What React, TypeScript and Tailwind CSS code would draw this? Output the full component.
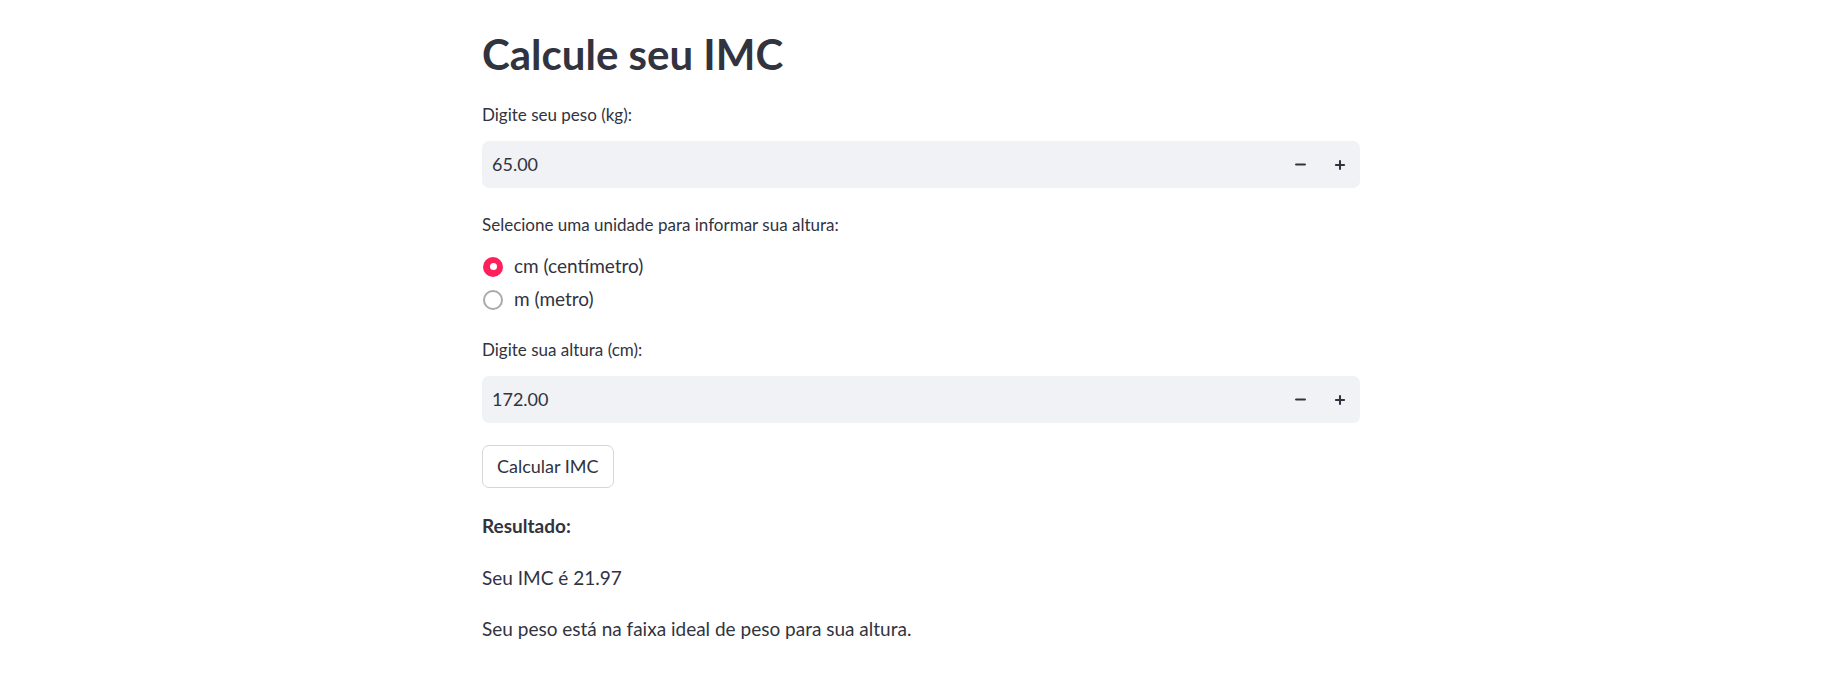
import { Minus, Plus } from "lucide-react";

const font = { fontFamily: "Lato, 'Liberation Sans', sans-serif" };

function NumberField({ label, value }: { label: string; value: string }) {
  return (
    <div>
      <p className="h-[24px] text-[17px] leading-[24px] text-[#31333f]">{label}</p>
      <div className="mt-[14px] flex h-[47px] items-center rounded-[7px] bg-[#f0f2f6]">
        <span className="flex-1 pl-[10px] text-[18px] text-[#31333f]">{value}</span>
        <button className="flex h-full w-[40px] items-center justify-center text-[#31333f]">
          <Minus size={15} strokeWidth={3.5} />
        </button>
        <button className="flex h-full w-[40px] items-center justify-center text-[#31333f]">
          <Plus size={14} strokeWidth={3.5} />
        </button>
      </div>
    </div>
  );
}

function Radio({ label, checked }: { label: string; checked?: boolean }) {
  return (
    <label className="flex h-[33px] items-center gap-[11px] text-[19px] text-[#31333f]">
      {checked ? (
        <span className="ml-[1px] flex h-[20px] w-[20px] items-center justify-center rounded-full bg-[#ff1f5a]">
          <span className="h-[7px] w-[7px] rounded-full bg-white" />
        </span>
      ) : (
        <span className="ml-[1px] h-[20px] w-[20px] rounded-full border-[2.5px] border-[#a9a9ae] bg-white" />
      )}
      {label}
    </label>
  );
}

export default function App() {
  return (
    <div className="flex min-h-[687px] justify-center bg-white pr-[6px]" style={font}>
      <main className="w-[878px] pt-[24px] text-[#31333f]">
        <h1 className="h-[60px] text-[42px] font-bold leading-[60px]">Calcule seu IMC</h1>

        <div className="mt-[19px]">
          <NumberField label="Digite seu peso (kg):" value="65.00" />
        </div>

        <p className="mt-[25px] h-[24px] text-[17px] leading-[24px]">
          Selecione uma unidade para informar sua altura:
        </p>
        <div className="mt-[13px]">
          <Radio label="cm (centímetro)" checked />
          <Radio label="m (metro)" />
        </div>

        <div className="mt-[22px]">
          <NumberField label="Digite sua altura (cm):" value="172.00" />
        </div>

        <button className="mt-[22px] h-[43px] rounded-[7px] border border-[#d5d6d9] bg-white px-[14px] text-[18px] text-[#31333f]">
          Calcular IMC
        </button>

        <p className="mt-[24px] text-[19px] font-bold leading-[27px]">Resultado:</p>
        <p className="mt-[25px] text-[19px] leading-[27px]">Seu IMC é 21.97</p>
        <p className="mt-[24px] text-[19px] leading-[27px]">
          Seu peso está na faixa ideal de peso para sua altura.
        </p>
      </main>
    </div>
  );
}
